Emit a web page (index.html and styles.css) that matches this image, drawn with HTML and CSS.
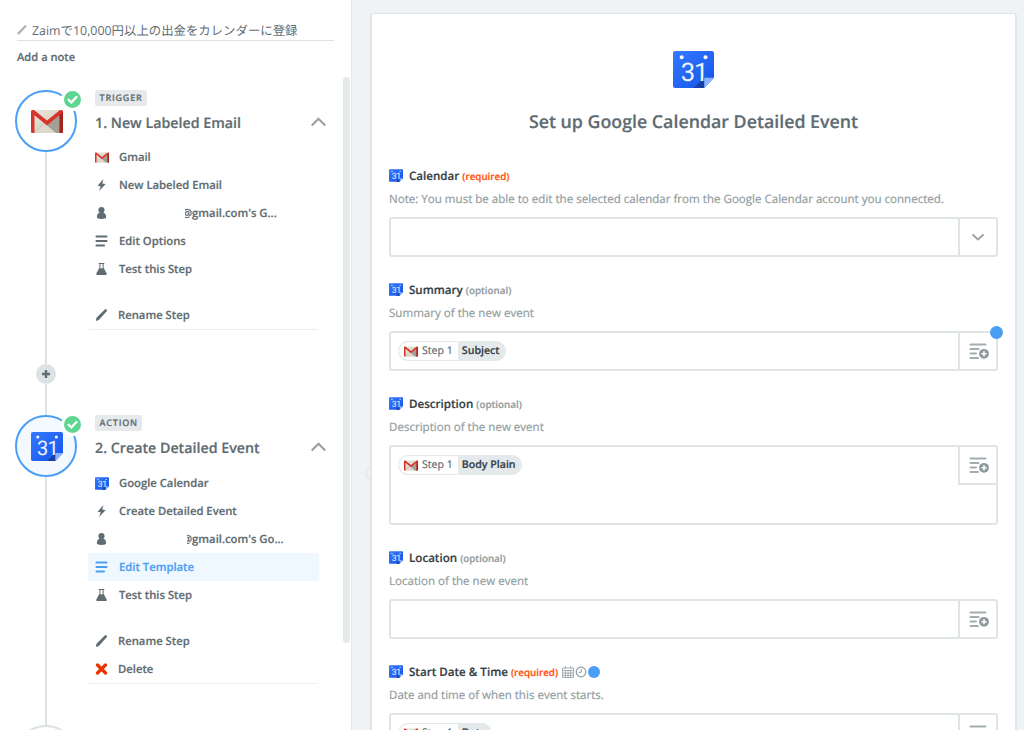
FILE: index.html
```html
<!DOCTYPE html>
<html lang="en">
<head>
<meta charset="utf-8">
<title>Zap editor</title>
<link rel="stylesheet" href="styles.css">
</head>
<body>
<svg class="defs" width="0" height="0" aria-hidden="true">
  <defs>
    <linearGradient id="calBlue" x1="0" y1="0" x2="1" y2="1"><stop offset="0" stop-color="#3579ff"/><stop offset="1" stop-color="#1453ea"/></linearGradient>
    <linearGradient id="paper" x1="0" y1="0" x2="1" y2="1"><stop offset="0" stop-color="#ebe7d8"/><stop offset="1" stop-color="#cfccbc"/></linearGradient>
    <symbol id="cal" viewBox="0 0 40 36">
      <path d="M2 0H38Q40 0 40 2V26L30.500 36H2Q0 36 0 34V2Q0 0 2 0Z" fill="url(#calBlue)"/>
      <path d="M20 36L30.500 26V36Z" fill="#1541a5"/>
      <path d="M30.500 26H40L30.500 36Z" fill="#8fb3ff"/>
      <circle cx="8.500" cy="6" r="1.900" fill="#fff"/><circle cx="31.700" cy="6" r="1.900" fill="#fff"/>
      <text x="7.500" y="29" class="cal-num">31</text>
    </symbol>
    <symbol id="mail" viewBox="0 0 32 23">
      <rect width="32" height="23" rx="1.500" fill="url(#paper)"/>
      <path d="M3 23L16 12L29 23Z" fill="#dedacb"/>
      <path d="M16 15.500L28.500 5V23H25L16 15.500Z" fill="#a29f93"/>
      <path d="M3 22.500L13 13.500" stroke="#bdb9a9" stroke-width=".7"/>
      <path d="M0 1.500Q0 0 1.500 0H3L16 10.500L29 0H30.500Q32 0 32 1.500V21.500Q32 23 30.500 23H28.500V5.200L16 15.500L3.500 5.200V23H1.500Q0 23 0 21.500Z" fill="#d5352c"/>
      <path d="M28.500 5.200L32 2V21.500Q32 23 30.500 23H28.500Z" fill="#a5221d"/>
    </symbol>
    <symbol id="bolt" viewBox="0 0 12 12"><path d="M8 0L2 6.800L5.200 7.200L3.600 12L10.200 5L6.800 4.600Z"/></symbol>
    <symbol id="person" viewBox="0 0 12 12"><path d="M6 0C7.900 0 9.100 1.300 9.100 3.100C9.100 4.200 8.600 5.100 7.900 5.700C9.700 6.200 10.600 7.500 10.600 10.300C10.600 11.500 9 12 6 12S1.400 11.500 1.400 10.300C1.400 7.500 2.300 6.200 4.100 5.700C3.400 5.100 2.900 4.200 2.900 3.100C2.900 1.300 4.100 0 6 0Z"/></symbol>
    <symbol id="lines" viewBox="0 0 12 12"><path d="M1 1.500H11M1 6H11M1 10.500H8.500" fill="none" stroke="currentColor" stroke-width="2.100" stroke-linecap="round"/></symbol>
    <symbol id="flask" viewBox="0 0 12 12"><path fill-rule="evenodd" d="M3.200 0H8.800V1H8.100V4.700L11.200 10.400Q11.500 12 10.300 12H1.700Q.5 12 .8 10.400L3.900 4.700V1H3.200ZM4.900 1V4.500L4.500 5.300H7.500L7.100 4.500V1Z"/></symbol>
    <symbol id="pencil" viewBox="0 0 12 12"><path d="M9.300 .4Q10.200-.2 11 .5Q11.800 1.300 11.200 2.200L3.300 10.900L.3 11.900L1 8.800Z"/></symbol>
    <symbol id="cross" viewBox="0 0 12 12"><path d="M2 2L10 10M10 2L2 10" stroke="currentColor" stroke-width="3.200" stroke-linecap="round"/></symbol>
    <symbol id="up" viewBox="0 0 14 9"><path d="M.7 7.800L7 1.400L13.300 7.800" fill="none" stroke="currentColor" stroke-width="2"/></symbol>
    <symbol id="down" viewBox="0 0 14 9"><path d="M1.500 1.500L7 6.500L12.500 1.500" fill="none" stroke="currentColor" stroke-width="1.800"/></symbol>
    <symbol id="tick" viewBox="0 0 17 17"><path d="M4.600 8.800L7.400 11.400L12.500 6" fill="none" stroke="#fff" stroke-width="2.300" stroke-linecap="round"/></symbol>
    <symbol id="insert" viewBox="0 0 20 17"><g fill="none" stroke="#a3adb1" stroke-width="2" stroke-linecap="round"><path d="M1.500 1.500H16.500M1.500 6H9.500M1.500 10.500H7M1.500 15H9"/></g><circle cx="15" cy="10.800" r="4.900" fill="#8e999e"/><path d="M15 8.300V13.300M12.500 10.800H17.500" stroke="#fff" stroke-width="1.600"/></symbol>
    <symbol id="grid" viewBox="0 0 12 12"><path d="M.5 2H11.500V11.500H.5ZM.5 4.500H11.500M.5 7H11.500M.5 9.300H11.500M3.300 4V11.500M6 4V11.500M8.700 4V11.500M3.300 0V3M8.700 0V3" fill="none" stroke="currentColor" stroke-width=".8"/></symbol>
    <symbol id="clock" viewBox="0 0 12 12"><circle cx="6" cy="6" r="4.800" fill="none" stroke="currentColor" stroke-width="1.200"/><path d="M6.300 3V6.300H3.600" fill="none" stroke="currentColor" stroke-width="1"/></symbol>
  </defs>
</svg>
<div class="editor">
  <aside class="sidebar">
    <header class="zap-head">
      <div class="zap-name"><svg class="name-pencil"><use href="#pencil"/></svg><span>Zaimで10,000円以上の出金をカレンダーに登録</span></div>
      <div class="add-note">Add a note</div>
    </header>
    <div class="steps">
      <section class="step trigger-step">
        <div class="track">
          <div class="app-circle"><svg class="circle-mail"><use href="#mail"/></svg><span class="badge"><svg><use href="#tick"/></svg></span></div>
          <div class="rail"></div>
          <div class="plus"><svg viewBox="0 0 10 10"><path d="M5 1V9M1 5H9" stroke="currentColor" stroke-width="2.400"/></svg></div>
          <div class="rail rail-short"></div>
        </div>
        <div class="step-body">
          <span class="tag">TRIGGER</span>
          <div class="step-title"><h2>1. New Labeled Email</h2><svg class="chev"><use href="#up"/></svg></div>
          <ul class="menu">
            <li><svg class="app"><use href="#mail" /></svg>Gmail</li>
            <li><svg><use href="#bolt"/></svg>New Labeled Email</li>
            <li><svg><use href="#person"/></svg><span class="account">@gmail.com's G...</span></li>
            <li><svg><use href="#lines"/></svg>Edit Options</li>
            <li><svg><use href="#flask"/></svg>Test this Step</li>
          </ul>
          <ul class="menu extra"><li><svg><use href="#pencil"/></svg>Rename Step</li></ul>
        </div>
      </section>
      <section class="step action-step">
        <div class="track">
          <div class="app-circle active"><svg class="circle-cal"><use href="#cal"/></svg><span class="badge"><svg><use href="#tick"/></svg></span></div>
          <div class="rail"></div>
        </div>
        <div class="step-body">
          <span class="tag">ACTION</span>
          <div class="step-title"><h2>2. Create Detailed Event</h2><svg class="chev"><use href="#up"/></svg></div>
          <ul class="menu">
            <li><svg class="app"><use href="#cal"/></svg>Google Calendar</li>
            <li><svg><use href="#bolt"/></svg>Create Detailed Event</li>
            <li><svg><use href="#person"/></svg><span class="account clipped">@gmail.com's Go...</span></li>
            <li class="selected"><svg><use href="#lines"/></svg>Edit Template</li>
            <li><svg><use href="#flask"/></svg>Test this Step</li>
          </ul>
          <ul class="menu extra"><li><svg><use href="#pencil"/></svg>Rename Step</li><li><svg class="red"><use href="#cross"/></svg>Delete</li></ul>
        </div>
      </section>
      <section class="step"><div class="track"><div class="app-circle empty"></div></div></section>
    </div>
    <div class="scrollbar"></div>
  </aside>
  <main class="main">
    <div class="panel-handle"></div>
    <div class="card">
      <svg class="hero"><use href="#cal"/></svg>
      <h1>Set up Google Calendar Detailed Event</h1>
      <div class="field">
        <div class="label"><svg class="app"><use href="#cal"/></svg><b>Calendar</b><span class="required">(required)</span></div>
        <p>Note: You must be able to edit the selected calendar from the Google Calendar account you connected.</p>
        <div class="input"><div class="value"></div><div class="button"><svg class="drop"><use href="#down"/></svg></div></div>
      </div>
      <div class="field">
        <div class="label"><svg class="app"><use href="#cal"/></svg><b>Summary</b><span class="optional">(optional)</span></div>
        <p>Summary of the new event</p>
        <div class="input"><div class="value"><span class="chip"><span class="source"><svg><use href="#mail"/></svg>Step 1</span><b>Subject</b></span></div><div class="button"><svg class="insert"><use href="#insert"/></svg></div><i class="beacon corner"></i></div>
      </div>
      <div class="field">
        <div class="label"><svg class="app"><use href="#cal"/></svg><b>Description</b><span class="optional">(optional)</span></div>
        <p>Description of the new event</p>
        <div class="input tall"><div class="value"><span class="chip"><span class="source"><svg><use href="#mail"/></svg>Step 1</span><b>Body Plain</b></span></div><div class="button"><svg class="insert"><use href="#insert"/></svg></div></div>
      </div>
      <div class="field">
        <div class="label"><svg class="app"><use href="#cal"/></svg><b>Location</b><span class="optional">(optional)</span></div>
        <p>Location of the new event</p>
        <div class="input"><div class="value"></div><div class="button"><svg class="insert"><use href="#insert"/></svg></div></div>
      </div>
      <div class="field">
        <div class="label"><svg class="app"><use href="#cal"/></svg><b>Start Date &amp; Time</b><span class="required">(required)</span><svg class="mini first"><use href="#grid"/></svg><svg class="mini"><use href="#clock"/></svg><i class="beacon"></i></div>
        <p>Date and time of when this event starts.</p>
        <div class="input"><div class="value"><span class="chip"><span class="source"><svg><use href="#mail"/></svg>Step 1</span><b>Date</b></span></div><div class="button"><svg class="insert"><use href="#insert"/></svg></div></div>
      </div>
    </div>
  </main>
</div>
</body>
</html>
```
FILE: styles.css
```css
* { box-sizing: border-box; }
body { margin: 0; height: 730px; overflow: hidden; font-family: "Open Sans", "Noto Sans CJK JP", sans-serif; font-size: 12px; color: #5f6c72; background: #eff3f5; text-rendering: geometricPrecision; -webkit-text-stroke-width: .2px; }
.defs { position: absolute; }
svg { display: block; flex: none; fill: currentColor; }
h1, h2, p, ul { margin: 0; padding: 0; }
.cal-num { font: 25px Roboto, sans-serif; fill: #eef3ff; letter-spacing: -1px; -webkit-text-stroke-width: 0; }
.editor { display: flex; height: 730px; overflow: hidden; }
.sidebar { position: relative; width: 352px; flex: none; background: #fff; border-right: 1px solid #e3e8ea; }
.zap-head { height: 90px; padding: 20px 0 0 17px; }
.zap-name { display: flex; align-items: center; gap: 5px; width: 317px; height: 21px; border-bottom: 1px solid #dde2e5; font-size: 12.400px; white-space: nowrap; -webkit-text-stroke-width: 0; }
.zap-name span { margin-top: -1px; }
.name-pencil { width: 10px; height: 10px; color: #adb5b9; }
.add-note { margin-top: 8px; line-height: 18px; font-size: 11.150px; font-weight: 600; }
.steps { display: flex; flex-direction: column; padding-left: 15px; }
.step { display: flex; gap: 18px; flex: none; }
.trigger-step { height: 325px; }
.action-step { height: 310px; }
.track { display: flex; flex-direction: column; align-items: center; width: 62px; }
.app-circle { position: relative; display: flex; align-items: center; justify-content: center; flex: none; width: 62px; height: 62px; border: 2px solid #4a9ff5; border-radius: 50%; }
.active { background: #f4f9ff; }
.empty { border-color: #dde2e5; }
.circle-mail, .circle-cal { margin-left: 1px; }
.circle-mail { width: 32px; height: 23px; }
.circle-cal { width: 32px; height: 29px; }
.badge { position: absolute; top: -4px; right: -9px; width: 23px; height: 23px; border: 3px solid #fff; border-radius: 50%; background: #5fd592; }
.badge svg { width: 17px; height: 17px; }
.rail { width: 2px; flex: 1; background: #dde2e5; }
.rail-short { flex: none; height: 31px; }
.plus { display: grid; place-items: center; width: 20px; height: 20px; border-radius: 50%; background: #dde2e5; }
.plus svg { width: 10px; height: 10px; }
.step-body { width: 230px; }
.step-body > .tag { display: block; width: max-content; height: 16px; padding: 0 4.500px; border-radius: 2px; background: #e6eaed; font-size: 9px; line-height: 16px; font-weight: 600; letter-spacing: .8px; }
.step-title { display: flex; justify-content: space-between; align-items: center; height: 22px; margin-top: 6px; }
.step-title h2 { font-size: 14.250px; font-weight: 600; white-space: nowrap; }
.chev { width: 15px; height: 10px; color: #98a2a6; margin: -3px -1px 0 0; }
.menu { list-style: none; width: 231px; margin: 9px 0 0 -7px; }
.menu li { display: flex; align-items: center; height: 28px; padding-left: 7px; gap: 11px; border-radius: 2px; font-size: 11.270px; line-height: 17px; font-weight: 600; white-space: nowrap; }
.menu li svg { width: 13px; height: 12px; }
.menu li .app { width: 14px; height: 13px; margin-right: -1px; }
.action-step .menu { margin-top: 10px; }
.extra, .action-step .menu.extra { margin-top: 18px; border-bottom: 1px solid #eceff0; border-radius: 3px; }
.menu.extra li { gap: 10px; }
.red { color: #eb3200; }
.selected { color: #4a9ff5; background: #eff7ff; }
.account { margin-left: 63px; clip-path: inset(0 0 0 3px); }
.account.clipped { clip-path: inset(0 0 0 5px); }
.scrollbar { position: absolute; left: 343px; top: 77px; width: 7px; height: 566px; border-radius: 3px; background: #e4e9ec; }
.main { position: relative; flex: 1; padding: 13px 7px 0 18px; }
.panel-handle { position: absolute; left: 13px; top: 467px; width: 13px; height: 13px; border: 2px solid #e5eaec; border-radius: 50%; }
.card { position: relative; display: flex; flex-direction: column; align-items: stretch; height: 760px; padding: 37px 17px 0; border: 1px solid #e0e5e8; border-width: 1px 2px; border-radius: 3px; background: #fff; }
.hero { width: 41px; height: 37px; align-self: center; }
h1 { height: 28px; margin: 20px 0 30px; line-height: 28px; text-align: center; font-size: 17.800px; font-weight: 600; }
.field { margin-bottom: 23px; }
.label { display: flex; align-items: center; height: 20px; font-size: 11.600px; white-space: nowrap; }
.label b { margin: 1px 3px 0 6px; line-height: 19px; font-weight: 600; color: #354147; }
.label .app { width: 14px; height: 13px; margin-top: -1px; }
.required, .optional { font-size: 9.800px; line-height: 15px; font-weight: 600; padding-top: 1px; }
.required { color: #ff4f0b; }
.optional { color: #929da1; }
.mini { width: 12px; height: 12px; color: #929da1; }
.mini.first { margin: 0 1px 0 4px; }
.beacon { width: 12px; height: 12px; border-radius: 50%; background: #4a9ff5; }
.mini + .beacon { margin-left: 1px; }
.corner { position: absolute; top: -7px; right: -7px; width: 13px; height: 13px; }
.field p { height: 20px; margin: 3px 0 8px; line-height: 22px; font-size: 11.570px; color: #929da1; white-space: nowrap; }
.input { position: relative; display: flex; height: 40px; border: 2px solid #dfe4e7; border-radius: 3px; }
.input.tall { height: 80px; }
.value { flex: 1; padding: 8px 0 0 7px; }
.button { display: grid; place-items: center; width: 38px; height: 36px; border-left: 2px solid #dfe4e7; }
.tall .button { height: 38px; border-bottom: 2px solid #dfe4e7; }
.drop { width: 14px; height: 9px; color: #98a2a6; }
.insert { width: 20px; height: 17px; margin: 1px 0 0 1px; }
.chip { display: inline-flex; height: 20px; border: 1px solid #e4e9ec; border-radius: 10px; background: #e4e9ec; overflow: hidden; font-size: 10.600px; line-height: 19px; white-space: nowrap; vertical-align: top; }
.source { display: flex; align-items: center; gap: 4px; padding: 0 5px 0 5px; border-radius: 9px 0 0 9px; background: #fff; }
.source svg { width: 14px; height: 11px; }
.chip b { padding: 0 5px 0 4px; font-weight: 600; color: #354147; }
```
